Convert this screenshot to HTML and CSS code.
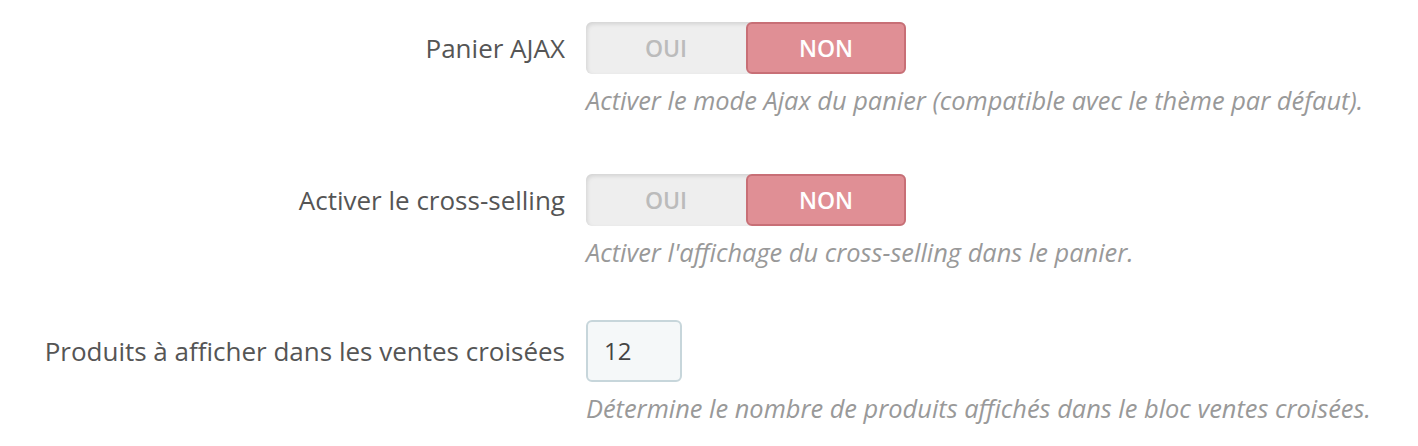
FILE: index.html
```html
<!DOCTYPE html>
<html lang="fr">
<head>
<meta charset="utf-8">
<link rel="stylesheet" href="styles.css">
</head>
<body>
<form class="form">
  <div class="row">
    <label class="label">Panier AJAX</label>
    <div class="control">
      <div class="switch">
        <span class="opt off">OUI</span>
        <span class="opt on">NON</span>
      </div>
      <p class="help">Activer le mode Ajax du panier (compatible avec le thème par défaut).</p>
    </div>
  </div>
  <div class="row">
    <label class="label">Activer le cross-selling</label>
    <div class="control">
      <div class="switch">
        <span class="opt off">OUI</span>
        <span class="opt on">NON</span>
      </div>
      <p class="help">Activer l'affichage du cross-selling dans le panier.</p>
    </div>
  </div>
  <div class="row">
    <label class="label">Produits à afficher dans les ventes croisées</label>
    <div class="control">
      <div class="input">12</div>
      <p class="help">Détermine le nombre de produits affichés dans le bloc ventes croisées.</p>
    </div>
  </div>
</form>
</body>
</html>
```
FILE: styles.css
```css
html, body {
  margin: 0;
  padding: 0;
  background: #fff;
}
body {
  font-family: "Open Sans", "Liberation Sans", sans-serif;
  color: #555;
}
.form {
  display: flex;
  flex-direction: column;
  padding-top: 22px;
}
.row {
  display: grid;
  grid-template-columns: 565px auto;
  column-gap: 21px;
  align-items: start;
  margin-bottom: 57px;
}
.row:nth-child(2) {
  margin-bottom: 51px;
}
.row:last-child {
  margin-bottom: 0;
}
.label {
  text-align: right;
  font-size: 26px;
  line-height: 52px;
  color: #555;
}
.row:last-child .label {
  line-height: 62px;
}
.control {
  display: flex;
  flex-direction: column;
  align-items: flex-start;
}
.switch {
  display: flex;
  width: 320px;
  height: 52px;
  background: #eee;
  border-radius: 6px;
  box-shadow: inset 1px 2px 4px rgba(0,0,0,0.12);
}
.opt {
  flex: 0 0 160px;
  display: flex;
  align-items: center;
  justify-content: center;
  font-size: 23px;
  font-weight: 600;
  box-sizing: border-box;
}
.opt.off {
  color: #bbb;
}
.opt.on {
  background: #e08f95;
  border: 2px solid #c86f76;
  border-radius: 6px;
  color: #fff;
}
.input {
  width: 96px;
  height: 62px;
  box-sizing: border-box;
  background: #f5f8f9;
  border: 2px solid #c7d6db;
  border-radius: 6px;
  font-size: 24px;
  line-height: 58px;
  padding-left: 16px;
  color: #444;
}
.help {
  margin: 9px 0 0;
  font-size: 25.4px;
  font-style: italic;
  color: #999;
  line-height: 34px;
}
```
